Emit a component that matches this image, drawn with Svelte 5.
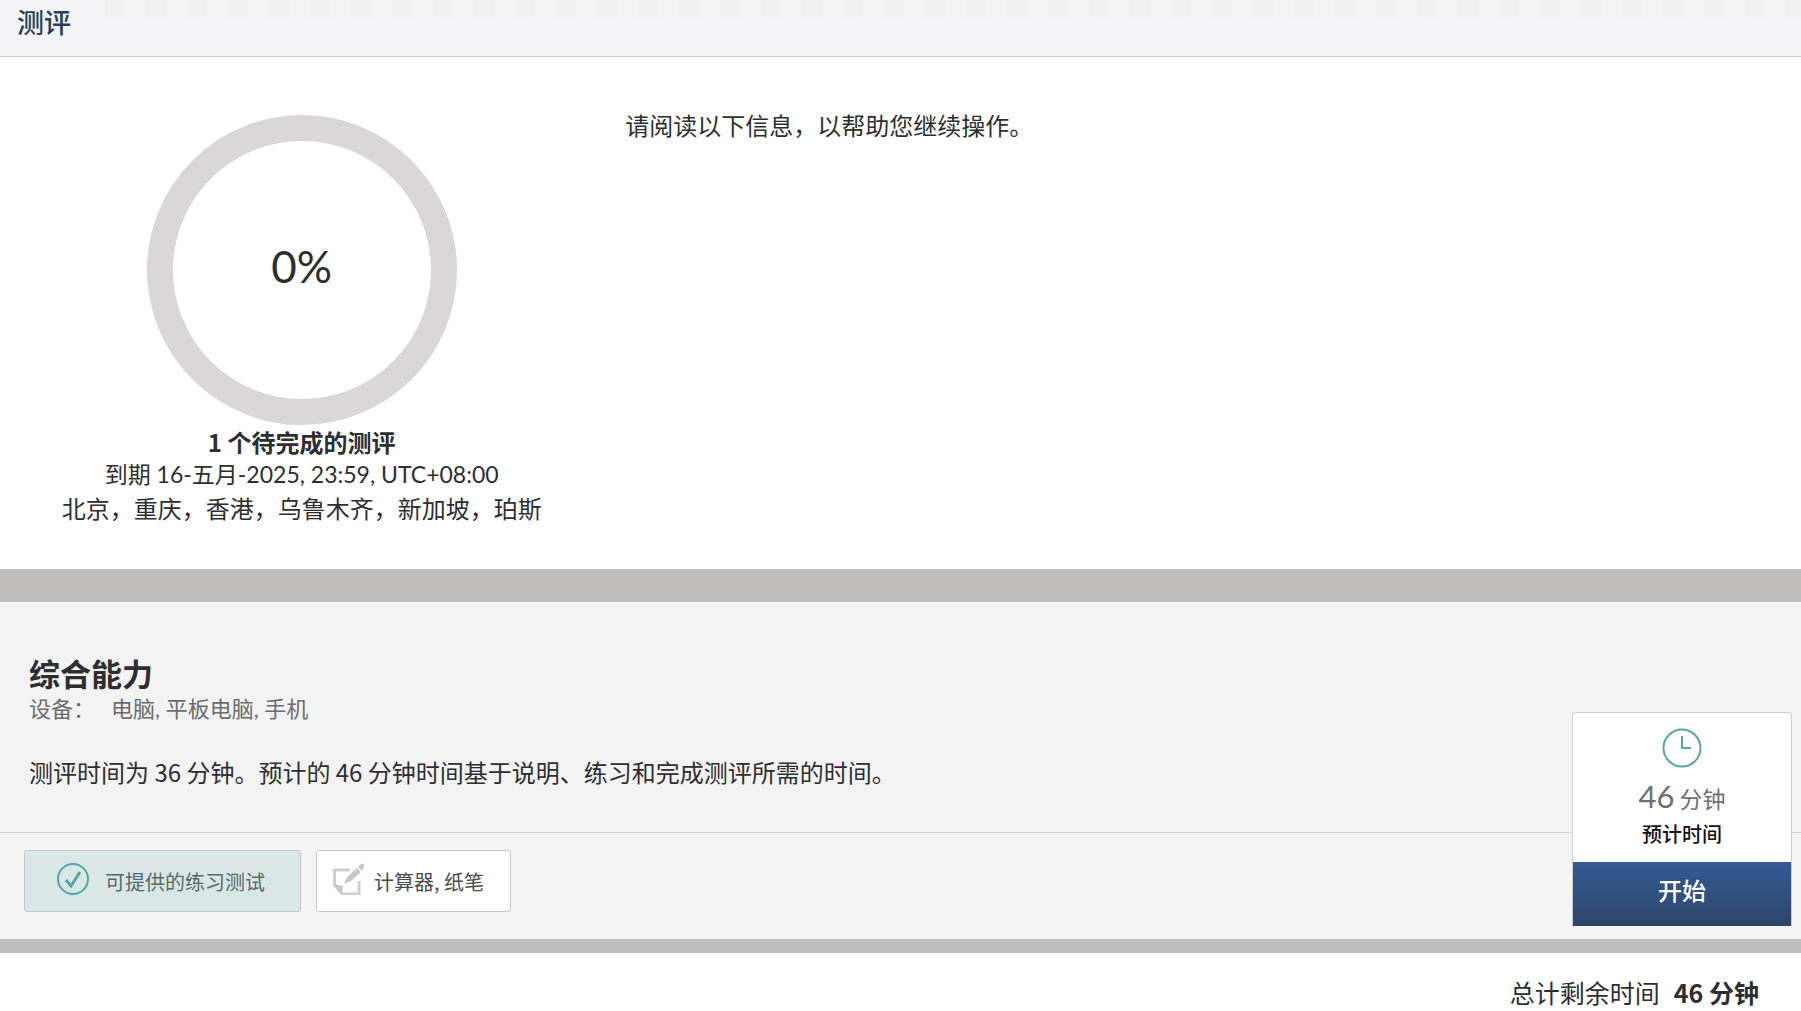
<script>
  const percent = 0;
  const zones = ['北京', '重庆', '香港', '乌鲁木齐', '新加坡', '珀斯'];
  const devices = ['电脑', '平板电脑', '手机'];
  const estimate = 46;
  const limit = 36;
</script>

<header class="topbar"><h1>测评</h1></header>

<main>
  <section class="overview">
    <div class="progress">
      <div class="ring" role="img" aria-label="{percent}%"><span>{percent}%</span></div>
      <p class="pending">1 个待完成的测评</p>
      <p class="due">到期 16-五月-2025, 23:59, UTC+08:00</p>
      <p>{zones.join('，')}</p>
    </div>
    <p class="intro">请阅读以下信息，以帮助您继续操作。</p>
  </section>

  <section class="assessment">
    <div class="details">
      <h2>综合能力</h2>
      <p class="devices"><span>设备：</span><span>{devices.join(', ')}</span></p>
      <p class="timing">测评时间为 {limit} 分钟。预计的 {estimate} 分钟时间基于说明、练习和完成测评所需的时间。</p>
    </div>

    <div class="extras">
      <button class="chip practice" type="button">
        <svg class="check" viewBox="0 0 32 32" aria-hidden="true">
          <circle cx="16" cy="16" r="15" />
          <path d="M9 17l5 6 9-14" />
        </svg>
        可提供的练习测试
      </button>
      <button class="chip tools" type="button">
        <svg class="note" viewBox="0 0 32 32" aria-hidden="true">
          <path class="sheet" d="M17 7H1.500V22L9 31h17V18" />
          <path class="fill" d="M1 21l9 2-1 8z" />
          <path class="fill" d="M11 21l3-7L24 5l4 4-10 9z" />
          <path class="fill" d="M25 4l3-3q2-1 3 0t0 3l-2 4z" />
        </svg>
        计算器, 纸笔
      </button>
    </div>

    <aside class="card">
      <div class="summary">
        <svg class="clock" viewBox="0 0 40 40" aria-hidden="true">
          <circle cx="20" cy="20" r="18.500" />
          <path d="M20 8v12h9" />
        </svg>
        <p class="minutes"><b>{estimate}</b> 分钟</p>
        <p class="label">预计时间</p>
      </div>
      <button class="start" type="button">开始</button>
    </aside>
  </section>
</main>

<footer><span>总计剩余时间</span><strong>{estimate} 分钟</strong></footer>

<style>
  :global(body) {
    margin: 0;
    background: #fff;
    color: #2e2e30;
    font: 24px/33px "Noto Sans CJK SC", sans-serif;
  }
  h1, h2, p { margin: 0; }
  button { font: inherit; cursor: pointer; }

  .topbar {
    box-sizing: border-box;
    height: 57px;
    padding: 2px 17px;
    border-bottom: 1px solid #d2d2d3;
    background:
      repeating-linear-gradient(90deg, #f1f1f1 0 20px, #f4f3f4 20px 41px) 105px 0 / 100% 18px no-repeat,
      #f4f3f5;
  }
  h1 { color: #263f60; font-size: 27px; font-weight: 500; line-height: 40px; }

  .overview {
    display: flex;
    align-items: flex-start;
    padding: 58px 0 45px;
  }
  .progress {
    box-sizing: border-box;
    width: 33.5%;
    text-align: center;
  }
  .ring {
    box-sizing: border-box;
    display: grid;
    place-items: center;
    width: 310px;
    height: 310px;
    margin: 0 auto;
    padding-bottom: 8px;
    border: 26px solid #d9d7d8;
    border-radius: 50%;
    font: 400 44px/50px Lato, sans-serif;
  }
  .pending { font-weight: 700; }
  .due { font-family: Lato, "Noto Sans CJK SC", sans-serif; font-size: 23px; }
  .intro { flex: 1; padding: 0 22px; margin-top: -7px; }

  .assessment {
    display: grid;
    grid-template: auto auto / 1fr;
    border: solid #bfbebd;
    border-width: 33px 0 14px;
    background: #f4f3f4;
  }
  .details {
    grid-area: 1 / 1;
    padding: 51px 240px 44px 29px;
  }
  h2 { font-size: 31px; font-weight: 700; line-height: 40px; }
  .devices {
    display: flex;
    align-items: baseline;
    gap: 16px;
    color: #6b6b6e;
    font-size: 22px;
    line-height: 28px;
  }
  .devices span:last-child { font-family: Lato, "Noto Sans CJK SC", sans-serif; }
  .timing { margin-top: 32px; }

  .extras {
    grid-area: 2 / 1;
    display: flex;
    gap: 15px;
    padding: 17px 24px 27px;
    border-top: 1px solid #d5d4d5;
    background: #f5f4f5;
  }
  .chip {
    box-sizing: border-box;
    display: flex;
    align-items: center;
    height: 62px;
    border: 1px solid #c6c6c6;
    border-radius: 3px;
    background: #fff;
    color: #4b4b4e;
    font-size: 20px;
  }
  .practice { gap: 16px; padding: 0 35px 0 32px; background: #d9e8e7; color: #5a6869; }
  .tools { gap: 9px; padding: 0 26px 0 16px; }
  svg { fill: none; flex: none; }
  .chip svg { margin-bottom: 4px; }
  .check { width: 32px; height: 32px; stroke: #55a5a3; stroke-width: 2; }
  .check path { stroke-width: 3; }
  .note { width: 32px; height: 32px; }
  .sheet { stroke: #cfcfcf; stroke-width: 3; }
  .fill { fill: #c8c8c8; }

  .card {
    grid-area: 1 / 1 / 3 / 2;
    place-self: end;
    box-sizing: border-box;
    width: 220px;
    margin: 0 9px 13px;
    border: 1px solid #cbcbcb;
    border-radius: 4px 4px 0 0;
    border-bottom: 0;
    background: #fff;
    text-align: center;
  }
  .summary { padding: 15px 0 12px; }
  .clock { display: block; width: 40px; height: 40px; margin: 0 auto; stroke: #58a6a0; stroke-width: 2; }
  .minutes { margin-top: 8px; color: #707073; font-size: 23px; line-height: 40px; }
  .minutes b { font: 400 31px/40px Lato, sans-serif; }
  .label { color: #111; font-size: 20px; font-weight: 500; line-height: 32px; }
  .start {
    display: block;
    width: 100%;
    height: 64px;
    padding: 0 0 10px;
    border: 0;
    background: linear-gradient(#345b94, #2c4669);
    color: #fff;
    font-weight: 500;
  }

  footer {
    display: flex;
    justify-content: flex-end;
    gap: 14px;
    padding: 20px 42px 0;
    font-size: 25px;
    line-height: 38px;
  }
  footer strong { font-weight: 700; }
</style>
